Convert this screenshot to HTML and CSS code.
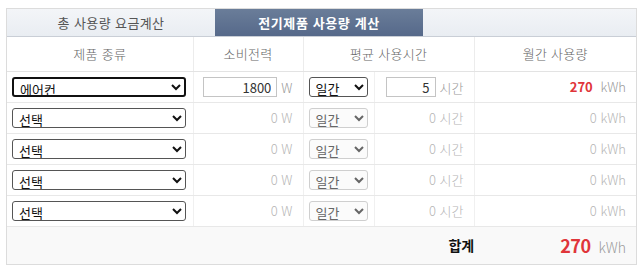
FILE: index.html
```html
<!DOCTYPE html>
<html lang="ko">
<head>
<meta charset="utf-8">
<title>전기제품 사용량 계산</title>
<link rel="stylesheet" href="styles.css">
</head>
<body>
<div class="calc">
  <div class="tabs">
    <div class="tab">총 사용량 요금계산</div>
    <div class="tab active">전기제품 사용량 계산</div>
    <div class="tab-rest"></div>
  </div>
  <table class="grid">
    <colgroup>
      <col class="c1"><col class="c2"><col class="c3"><col class="c4"><col class="c5">
    </colgroup>
    <thead>
      <tr>
        <th>제품 종류</th>
        <th>소비전력</th>
        <th colspan="2">평균 사용시간</th>
        <th>월간 사용량</th>
      </tr>
    </thead>
    <tbody>
      <tr>
        <td class="prod"><select class="sel focus"><option>에어컨</option></select></td>
        <td class="num"><input class="box w" value="1800"><span class="unit mid">W</span></td>
        <td class="per"><select class="sel small"><option>일간</option></select></td>
        <td class="num"><input class="box h" value="5"><span class="unit mid">시간</span></td>
        <td class="num"><b class="red">270</b> <span class="unit">kWh</span></td>
      </tr>
      <tr>
        <td class="prod"><select class="sel"><option>선택</option></select></td>
        <td class="num muted">0 W</td>
        <td class="per"><select class="sel small dim"><option>일간</option></select></td>
        <td class="num muted">0 시간</td>
        <td class="num muted">0 kWh</td>
      </tr>
      <tr>
        <td class="prod"><select class="sel"><option>선택</option></select></td>
        <td class="num muted">0 W</td>
        <td class="per"><select class="sel small dim"><option>일간</option></select></td>
        <td class="num muted">0 시간</td>
        <td class="num muted">0 kWh</td>
      </tr>
      <tr>
        <td class="prod"><select class="sel"><option>선택</option></select></td>
        <td class="num muted">0 W</td>
        <td class="per"><select class="sel small dim"><option>일간</option></select></td>
        <td class="num muted">0 시간</td>
        <td class="num muted">0 kWh</td>
      </tr>
      <tr>
        <td class="prod"><select class="sel"><option>선택</option></select></td>
        <td class="num muted">0 W</td>
        <td class="per"><select class="sel small dim"><option>일간</option></select></td>
        <td class="num muted">0 시간</td>
        <td class="num muted">0 kWh</td>
      </tr>
    </tbody>
    <tfoot>
      <tr>
        <td colspan="5">
          <div class="total">
            <span class="total-label">합계</span>
            <span class="total-val"><b class="red big">270</b> <span class="unit">kWh</span></span>
          </div>
        </td>
      </tr>
    </tfoot>
  </table>
</div>
</body>
</html>
```

FILE: styles.css
```css
* { box-sizing: border-box; }
body {
  margin: 0;
  background: #fff;
  font-family: "Noto Sans CJK KR", "Noto Sans", sans-serif;
  font-size: 13px;
  font-weight: 300;
  color: #333;
}
.calc {
  margin: 8px 0 0 6px;
  width: 631px;
  border: 1px solid #dcdcdc;
}
.tabs {
  display: flex;
  height: 28px;
  border-bottom: 1px solid #c9ced6;
  background: linear-gradient(#f3f5f8, #e9edf2);
}
.tab {
  width: 208px;
  display: flex;
  align-items: center;
  justify-content: center;
  color: #555;
  font-size: 13px;
  font-weight: 400;
  letter-spacing: 0.4px;
}
.tab.active {
  background: linear-gradient(#6a7d99, #56698a);
  color: #fff;
  font-weight: bold;
  letter-spacing: 0.6px;
}
.tab-rest { flex: 1; }
.grid {
  width: 100%;
  border-collapse: collapse;
  table-layout: fixed;
}
.c1 { width: 186px; }
.c2 { width: 110px; }
.c3 { width: 71px; }
.c4 { width: 100px; }
.c5 { width: auto; }
th {
  height: 34px;
  font-weight: 300;
  color: #666;
  font-size: 13px;
  letter-spacing: 0.3px;
  border-left: 1px solid #ececec;
  border-bottom: 1px solid #e3e3e3;
  padding: 0;
}
th:first-child { border-left: none; }
td {
  height: 31px;
  padding: 0;
  border-left: 1px solid #f0f0f0;
  border-bottom: 1px solid #e8e8e8;
  white-space: nowrap;
}
td:first-child { border-left: none; }
.prod { padding-left: 5px; }
.per { padding-left: 5px; }
.num { text-align: right; padding-right: 10px; }
.muted { color: #b5b5b5; }
.unit { color: #999; margin-left: 4px; }
.unit.mid { vertical-align: middle; }
.muted .unit { color: #b5b5b5; }
.sel {
  font-family: "Noto Sans CJK KR", "Noto Sans", sans-serif;
  font-size: 13px;
  font-weight: 400;
  color: #111;
  height: 20px;
  width: 174px;
  border: 1px solid #555;
  border-radius: 3px;
  background: #fff;
  padding: 0 2px;
  vertical-align: middle;
}
.sel.focus { border: 2px solid #111; }
.sel.small { width: 59px; }
.sel.dim {
  color: #666;
  border-color: #cfcfcf;
  background: #fbfbfb;
}
.box {
  font-family: "Noto Sans CJK KR", "Noto Sans", sans-serif;
  font-size: 13px;
  font-weight: 400;
  color: #333;
  height: 20px;
  border: 1px solid #c4c4c4;
  text-align: right;
  padding: 0 5px;
  vertical-align: middle;
}
.box.w { width: 74px; }
.box.h { width: 50px; }
.red { color: #e0353a; font-weight: bold; }
tfoot td {
  height: 38px;
  background: #f9f9f9;
  border-bottom: none;
}
.total {
  display: flex;
  justify-content: flex-end;
  align-items: center;
  padding-right: 10px;
}
.total-label {
  font-weight: bold;
  color: #111;
  font-size: 14px;
  margin-right: 86px;
}
.total-val { font-size: 14px; }
.big { font-size: 18px; letter-spacing: -0.5px; }
```
